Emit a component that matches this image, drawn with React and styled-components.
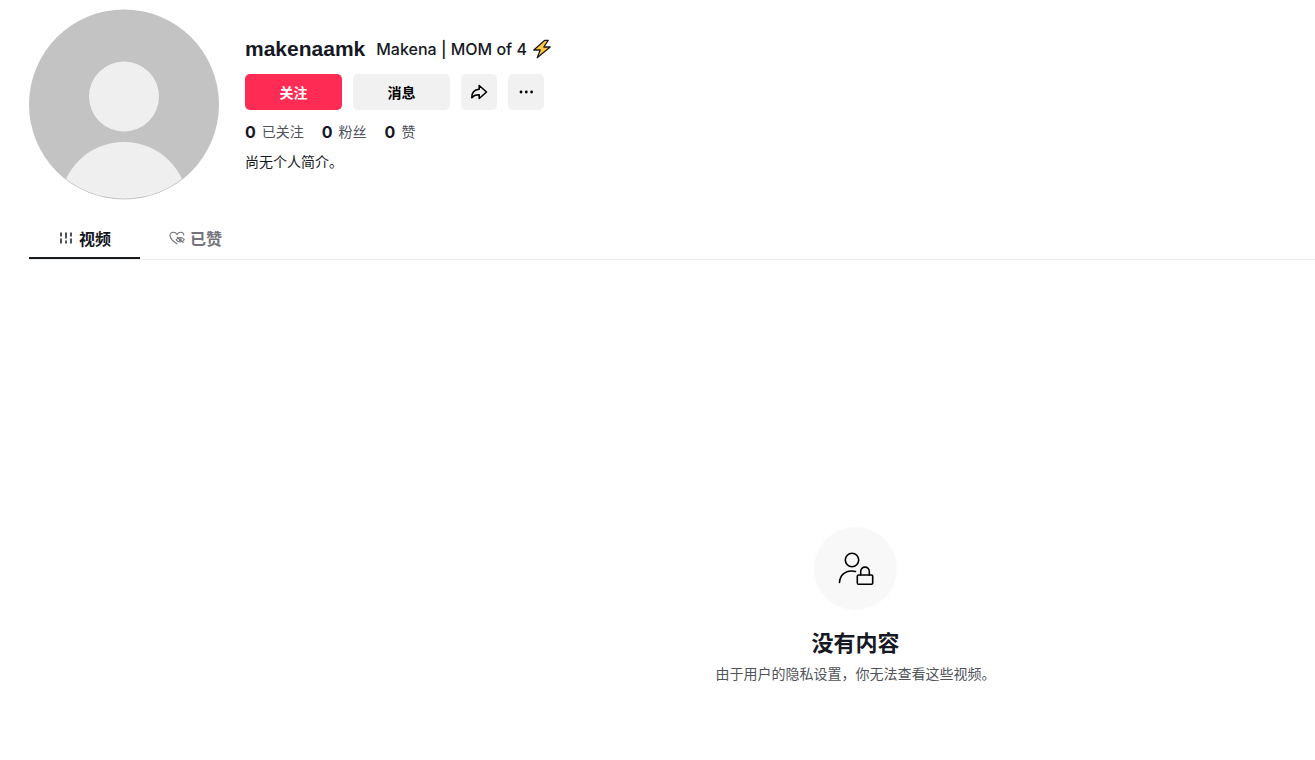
import React, { useState } from 'react'
import styled, { createGlobalStyle } from 'styled-components'

const GlobalStyle = createGlobalStyle`
    * {
        box-sizing: border-box;
    }

    body {
        margin: 0;
        background-color: #fff;
        color: #161823;
        font-family: "Liberation Sans", "Noto Sans CJK SC", sans-serif;
        font-size: 14px;
    }

    h1, h2, p, ul {
        margin: 0;
        padding: 0;
    }

    svg {
        display: block;
        flex-shrink: 0;
    }
`

const Page = styled.main`
    padding-block-start: 9px;
    padding-inline-start: 29px;
`

const Header = styled.header`
    display: flex;
    gap: 26px;
`

const Info = styled.div`
    padding-block-start: 27px;
`

const Names = styled.div`
    display: flex;
    align-items: center;
    height: 26px;
`

const Username = styled.h1`
    margin-inline-end: 11px;
    font-weight: 700;
    font-size: 21px;
    line-height: 26px;
`

const Nickname = styled.h2`
    margin-inline-end: 5px;
    font-family: Inter, "Noto Sans CJK SC", sans-serif;
    font-weight: 500;
    font-size: 16px;
    line-height: 26px;
`

const Actions = styled.div`
    display: flex;
    gap: 11px;
    margin-block-start: 12px;
`

const Btn = styled.button`
    display: flex;
    align-items: center;
    justify-content: center;
    width: ${({ $icon }) => ($icon ? '36px' : '97px')};
    height: 36px;
    padding: 0;
    border: none;
    border-radius: 5px;
    background-color: ${({ $primary }) => ($primary ? '#fe2c55' : '#f1f1f1')};
    color: ${({ $primary }) => ($primary ? '#fff' : '#000')};
    font-family: inherit;
    font-weight: 700;
    font-size: 14px;
    cursor: pointer;
`

const Stats = styled.ul`
    display: flex;
    gap: 18px;
    margin-block-start: 10px;
    list-style: none;
    line-height: 24px;
`

const Stat = styled.li`
    display: flex;
    align-items: center;
    gap: 6px;
    color: #50525a;

    strong {
        color: #161823;
        font-family: Inter, sans-serif;
        font-size: 16px;
    }
`

const Bio = styled.p`
    margin-block-start: 8px;
    line-height: 20px;
`

const Tabs = styled.nav`
    display: flex;
    margin-block-start: 18px;
    border-block-end: 1px solid #ebebeb;
`

const Tab = styled.button`
    display: flex;
    align-items: center;
    justify-content: center;
    gap: 5px;
    width: 111px;
    height: 41px;
    padding: 0;
    border: none;
    border-block-end: 2px solid ${({ $active }) => ($active ? '#161823' : 'transparent')};
    background-color: transparent;
    color: ${({ $active }) => ($active ? '#161823' : '#73747b')};
    font-family: inherit;
    font-weight: 700;
    font-size: 16px;
    cursor: pointer;
`

const Empty = styled.section`
    display: flex;
    flex-direction: column;
    align-items: center;
    padding-block: 267px 60px;
    padding-inline-start: 367px;
    text-align: center;
`

const EmptyIcon = styled.div`
    display: flex;
    align-items: center;
    justify-content: center;
    width: 83px;
    height: 83px;
    border-radius: 50%;
    background-color: #f8f8f8;
`

const EmptyTitle = styled.h2`
    margin-block-start: 18px;
    font-size: 22px;
    line-height: 32px;
`

const EmptyText = styled.p`
    margin-block-start: 4px;
    color: #50525a;
    line-height: 20px;
`

const Avatar = () => (
    <svg width="190" height="191" viewBox="0 0 190 191" role="img" aria-label="makenaamk">
        <clipPath id="avatar-clip">
            <circle cx="95" cy="95" r="94.6" />
        </clipPath>
        <circle cx="95" cy="95.5" r="95" fill="#c3c3c3" />
        <circle cx="95" cy="87.5" r="35" fill="#efefef" />
        <ellipse cx="95" cy="197" rx="64" ry="64" fill="#efefef" clipPath="url(#avatar-clip)" />
    </svg>
)

const Bolt = () => (
    <svg width="20" height="20" viewBox="0 0 20 20" aria-hidden="true">
        <path
            d="M12.8 1.3 1.8 11h6.4l-3 7.7L18.2 8h-6.4l4.4-6.7z"
            fill="#ffc83d"
            stroke="#1b1b1b"
            strokeWidth="1.3"
            strokeLinejoin="round"
        />
    </svg>
)

const ShareIcon = () => (
    <svg width="18" height="18" viewBox="0 0 18 18" fill="none" aria-hidden="true">
        <path
            d="M9.2 2.5 16.5 9l-7.3 6.5v-3.7c-3.7-.2-5.8.8-7.4 2.9C1.7 9.700 4 6.600 9.200 6.200z"
            stroke="currentColor"
            strokeWidth="1.600"
            strokeLinejoin="round"
        />
    </svg>
)

const MoreIcon = () => (
    <svg width="18" height="18" viewBox="0 0 18 18" fill="currentColor" aria-hidden="true">
        <circle cx="4" cy="9" r="1.400" />
        <circle cx="9.300" cy="9" r="1.400" />
        <circle cx="14.600" cy="9" r="1.400" />
    </svg>
)

const VideosIcon = () => (
    <svg width="16" height="16" viewBox="0 0 16 16" fill="none" aria-hidden="true">
        <path
            d="M3 2.500v4M3 8.500v5M8 2.500v6M8 10.500v3M13 2.500v4M13 8.500v5"
            stroke="currentColor"
            strokeWidth="1.500"
        />
    </svg>
)

const LikedIcon = () => (
    <svg width="16" height="16" viewBox="0 0 16 16" fill="none" stroke="currentColor" strokeWidth="1.100" aria-hidden="true">
        <path d="M8.300 14C4.300 11.500 1 8.500 1 5.500 1 3.500 2.500 2.300 4.300 2.300c1.600 0 2.900.8 3.700 2.200.8-1.400 2.100-2.200 3.600-2.200 1.900 0 3.200 1.300 3.200 3.300" />
        <path d="M7.100 9.800c1.900-3 6.200-3 8.200 0-2 3-6.300 3-8.200 0z" />
        <circle cx="11.200" cy="9.800" r="1" />
        <path d="m8 7 6.500 5.800" />
    </svg>
)

const PrivateIcon = () => (
    <svg
        width="40"
        height="40"
        viewBox="0 0 40 40"
        fill="none"
        stroke="#000"
        strokeWidth="1.600"
        strokeLinecap="round"
        aria-hidden="true"
    >
        <circle cx="16" cy="11" r="6.700" />
        <path d="M3.500 33.500c.4-7 5.200-11.500 12-11.500 1.500 0 2.900.2 4 .5" />
        <rect x="21.300" y="26" width="15.400" height="9.300" rx="1.200" />
        <path d="M24.700 26v-3.600a4.300 4.300 0 0 1 8.600 0V26" />
    </svg>
)

const stats = [
    { label: '已关注', count: 0 },
    { label: '粉丝', count: 0 },
    { label: '赞', count: 0 },
]

const App = () => {
  const [tab, setTab] = useState('videos')

  return (
    <Page>
        <GlobalStyle />
        <Header>
            <Avatar />
            <Info>
                <Names>
                    <Username>makenaamk</Username>
                    <Nickname>Makena | MOM of 4</Nickname>
                    <Bolt />
                </Names>
                <Actions>
                    <Btn $primary>关注</Btn>
                    <Btn>消息</Btn>
                    <Btn $icon aria-label="分享"><ShareIcon /></Btn>
                    <Btn $icon aria-label="更多"><MoreIcon /></Btn>
                </Actions>
                <Stats>
                    {stats.map(({ label, count }) => (
                        <Stat key={label}>
                            <strong>{count}</strong>
                            <span>{label}</span>
                        </Stat>
                    ))}
                </Stats>
                <Bio>尚无个人简介。</Bio>
            </Info>
        </Header>
        <Tabs>
            <Tab $active={tab === 'videos'} onClick={() => setTab('videos')}>
                <VideosIcon />
                视频
            </Tab>
            <Tab $active={tab === 'liked'} onClick={() => setTab('liked')}>
                <LikedIcon />
                已赞
            </Tab>
        </Tabs>
        <Empty>
            <EmptyIcon><PrivateIcon /></EmptyIcon>
            <EmptyTitle>没有内容</EmptyTitle>
            <EmptyText>由于用户的隐私设置，你无法查看这些视频。</EmptyText>
        </Empty>
    </Page>
  )
}

export default App
